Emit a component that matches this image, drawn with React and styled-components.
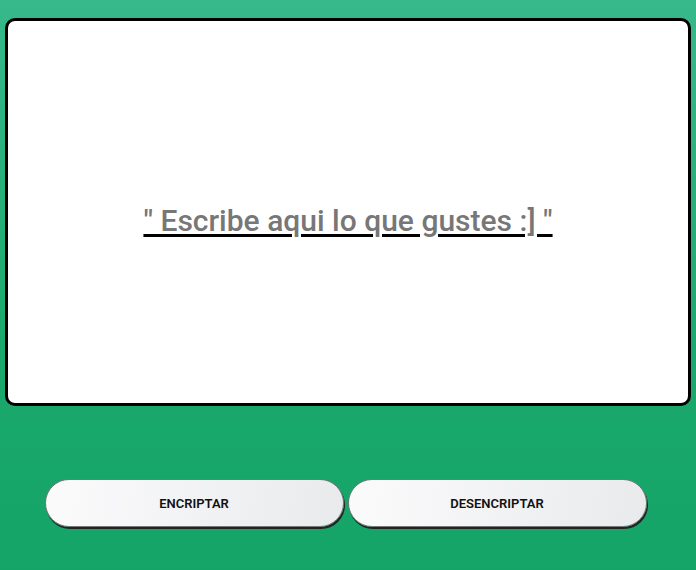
import React, { useState } from "react";
import styled, { createGlobalStyle } from "styled-components";

const GlobalStyle = createGlobalStyle`
  html, body {
    margin: 0;
    height: 100%;
  }
  body {
    font-family: "Roboto", "Liberation Sans", sans-serif;
    background: linear-gradient(180deg, #37b98b 0%, #1ba96e 60%, #15a468 100%);
    background-attachment: fixed;
  }
`;

export default function App() {
  const [text, setText] = useState("");

  return (
    <>
      <GlobalStyle />
      <Page>
        <Editor
          value={text}
          onChange={(e) => setText(e.target.value)}
          placeholder='" Escribe aqui lo que gustes :] "'
        />
        <Actions>
          <ActionButton>ENCRIPTAR</ActionButton>
          <ActionButton>DESENCRIPTAR</ActionButton>
        </Actions>
      </Page>
    </>
  );
}

const Page = styled.main`
  width: 696px;
  height: 570px;
  box-sizing: border-box;
  padding: 18px 5px 0 5px;
  display: flex;
  flex-direction: column;
  align-items: center;
`;

const Editor = styled.textarea`
  width: 100%;
  height: 388px;
  box-sizing: border-box;
  border: 3px solid #000;
  border-radius: 10px;
  background: #fff;
  padding: 182px 20px 0;
  resize: none;
  outline: none;
  text-align: center;
  font-family: "Roboto", "Liberation Sans", sans-serif;
  font-size: 30px;
  font-weight: 500;
  color: #444;
  &::placeholder {
    color: #777;
    text-decoration: underline;
    text-decoration-color: #000;
    text-decoration-thickness: 3px;
    text-underline-offset: 3px;
  }
`;

const Actions = styled.div`
  margin-top: 73px;
  padding-right: 5px;
  display: flex;
  gap: 4px;
  justify-content: center;
`;

const ActionButton = styled.button`
  width: 299px;
  height: 48px;
  border-radius: 24px;
  border: 1px solid #777;
  box-shadow: 1px 2px 0 #222;
  background: linear-gradient(100deg, #fbfbfc 0%, #e9eaec 100%);
  font-family: "Roboto", "Liberation Sans", sans-serif;
  font-size: 13px;
  font-weight: 600;
  color: #111;
  cursor: pointer;
`;
